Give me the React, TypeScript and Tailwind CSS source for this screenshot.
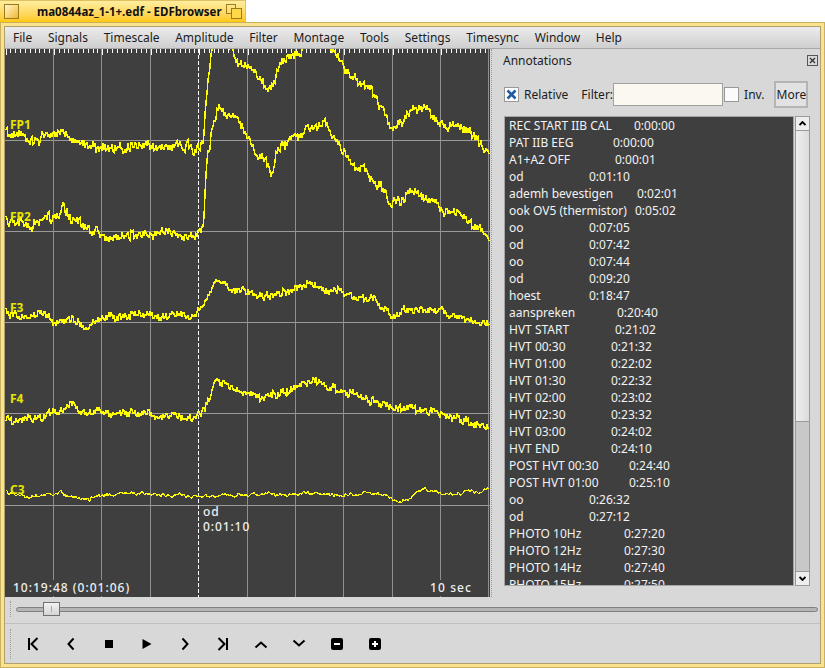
import React from "react";

type P = [number, number];
const fp1: P[] = [[5,130],[8,137],[30,137],[50,135],[59,130],[62,128],[70,140],[90,146],[130,147],[150,146],[195,148],[203,140],[206,100],[210,65],[213,40],[228,40],[240,62],[250,68],[257,77],[265,88],[272,87],[276,76],[280,62],[287,57],[300,50],[305,40],[328,40],[332,50],[345,70],[360,85],[372,90],[385,115],[392,130],[405,118],[415,105],[430,108],[440,125],[455,128],[470,135],[488,155]];
const fp2: P[] = [[5,212],[8,225],[30,225],[40,222],[50,220],[60,215],[62,205],[72,222],[90,232],[130,237],[195,235],[203,225],[207,160],[212,130],[219,107],[230,115],[245,135],[255,150],[265,160],[272,170],[278,150],[290,143],[300,135],[315,122],[325,120],[335,140],[350,160],[365,175],[380,185],[392,205],[405,195],[415,190],[430,203],[445,210],[460,215],[488,238]];
const f3: P[] = [[5,310],[8,316],[25,317],[35,312],[50,314],[53,320],[80,323],[88,330],[100,318],[130,315],[195,316],[205,305],[215,283],[225,285],[250,292],[280,292],[310,283],[340,292],[370,300],[395,315],[415,308],[440,312],[470,320],[488,325]];
const f4: P[] = [[5,420],[40,417],[60,412],[70,405],[85,412],[120,413],[195,417],[205,410],[215,380],[240,390],[265,398],[290,390],[315,382],[340,390],[370,398],[395,408],[420,408],[450,415],[488,428]];
const c3: P[] = [[5,492],[30,497],[60,493],[90,500],[100,496],[130,493],[195,496],[300,494],[380,494],[392,499],[400,503],[410,497],[425,490],[440,495],[488,491]];

function trace(k: P[], amp: number, seed: number) {
  let s = seed;
  const rnd = () => {
    s = (s * 16807) % 2147483647;
    return s / 2147483647 - 0.5;
  };
  const pts: string[] = [];
  let i = 0;
  let slow = 0;
  for (let x = 6; x <= 489; x += 1) {
    while (i < k.length - 2 && x > k[i + 1][0]) i++;
    const [x0, y0] = k[i];
    const [x1, y1] = k[i + 1];
    slow = slow * 0.8 + rnd() * amp * 0.6;
    const y = y0 + ((y1 - y0) * (x - x0)) / (x1 - x0) + rnd() * amp + slow;
    pts.push(`${x},${y.toFixed(0)}`);
  }
  return pts.join(" ");
}

const vlines = [53, 101, 150, 247, 295, 343, 392, 440, 488];
const hlines = [140, 231, 322, 413, 505];
const ticks = Array.from({ length: 101 }, (_, i) => 5.5 + i * 4.84);

const rows: [string, string, number][] = [
  ["REC START IIB CAL", "0:00:00", 634],
  ["PAT IIB EEG", "0:00:00", 613],
  ["A1+A2 OFF", "0:00:01", 615],
  ["od", "0:01:10", 589],
  ["ademh bevestigen", "0:02:01", 637],
  ["ook OV5 (thermistor)", "0:05:02", 635],
  ["oo", "0:07:05", 589],
  ["od", "0:07:42", 589],
  ["oo", "0:07:44", 589],
  ["od", "0:09:20", 589],
  ["hoest", "0:18:47", 589],
  ["aanspreken", "0:20:40", 617],
  ["HVT START", "0:21:02", 615],
  ["HVT 00:30", "0:21:32", 611],
  ["HVT 01:00", "0:22:02", 611],
  ["HVT 01:30", "0:22:32", 611],
  ["HVT 02:00", "0:23:02", 611],
  ["HVT 02:30", "0:23:32", 611],
  ["HVT 03:00", "0:24:02", 611],
  ["HVT END", "0:24:10", 611],
  ["POST HVT 00:30", "0:24:40", 629],
  ["POST HVT 01:00", "0:25:10", 629],
  ["oo", "0:26:32", 589],
  ["od", "0:27:12", 589],
  ["PHOTO 10Hz", "0:27:20", 624],
  ["PHOTO 12Hz", "0:27:30", 624],
  ["PHOTO 14Hz", "0:27:40", 624],
  ["PHOTO 15Hz", "0:27:50", 624],
];

const menus = ["File", "Signals", "Timescale", "Amplitude", "Filter", "Montage", "Tools", "Settings", "Timesync", "Window", "Help"];

function Chart() {
  return (
    <svg viewBox="5 49 485 548" width={485} height={548} className="absolute left-0 top-0" shapeRendering="crispEdges">
      {hlines.map((y) => (
        <line key={y} x1={5} x2={490} y1={y + 0.5} y2={y + 0.5} stroke="#9a9a9a" strokeWidth={1} />
      ))}
      {vlines.map((x) => (
        <line key={x} x1={x + 0.5} x2={x + 0.5} y1={49} y2={597} stroke="#8f8f8f" strokeWidth={1} />
      ))}
      <line x1={198.5} x2={198.5} y1={49} y2={597} stroke="#ffffff" strokeWidth={1} strokeDasharray="4 2" />
      {ticks.map((x, i) => (
        <line key={i} x1={Math.round(x) + 0.5} x2={Math.round(x) + 0.5} y1={49} y2={i % 10 === 0 ? 55 : 53} stroke="#ffffff" strokeWidth={1} />
      ))}
      <g fill="none" stroke="#ffff00" strokeLinejoin="miter">
        <polyline points={trace(fp1, 8, 11)} strokeWidth={1.5} />
        <polyline points={trace(fp2, 8, 29)} strokeWidth={1.5} />
        <polyline points={trace(f3, 6, 47)} strokeWidth={1.5} />
        <polyline points={trace(f4, 6, 83)} strokeWidth={1.5} />
        <polyline points={trace(c3, 3, 131)} strokeWidth={1.2} />
      </g>
    </svg>
  );
}

const icon = "w-[38px] h-[38px] flex items-center justify-center";
function Toolbar() {
  const s = { width: 16, height: 16, viewBox: "0 0 16 16", fill: "none", stroke: "#000", strokeWidth: 2 } as const;
  return (
    <div className="flex items-center ml-[3px]">
      <div className={icon}><svg {...s}><path d="M4 2v12M12.500 2L6.500 8l6 6" /></svg></div>
      <div className={icon}><svg {...s}><path d="M10.500 2.500L5.500 8l5 5.500" /></svg></div>
      <div className={icon}><svg {...s}><rect x="4" y="4" width="8" height="8" fill="#000" stroke="none" /></svg></div>
      <div className={icon}><svg {...s}><path d="M3.500 3L12.500 8l-9 5z" fill="#000" stroke="none" /></svg></div>
      <div className={icon}><svg {...s}><path d="M5.500 2.500L10.500 8l-5 5.500" /></svg></div>
      <div className={icon}><svg {...s}><path d="M3.500 2l6 6-6 6M12 2v12" /></svg></div>
      <div className={icon}><svg {...s}><path d="M2.500 11.500L8 6.500l5.500 5" /></svg></div>
      <div className={icon}><svg {...s}><path d="M2.500 4.500L8 9.500l5.500-5" /></svg></div>
      <div className={icon}><svg {...s}><rect x="2" y="2" width="12" height="12" rx="2" fill="#000" stroke="none" /><path d="M5 8h6" stroke="#fff" /></svg></div>
      <div className={icon}><svg {...s}><rect x="2" y="2" width="12" height="12" rx="2" fill="#000" stroke="none" /><path d="M5 8h6M8 5v6" stroke="#fff" /></svg></div>
    </div>
  );
}

function Grip({ h }: { h: string }) {
  return <div className={`w-[1px] shrink-0 border-l border-dotted border-[#9a9a9a] ${h}`} />;
}

export default function App() {
  return (
    <div className="w-[825px] h-[668px] bg-white flex flex-col overflow-hidden text-[12px] text-[#1c1c1c] font-['Noto_Sans',sans-serif]">
      <div className="w-[246px] h-[22px] shrink-0 border-t border-r border-[#e0c060] bg-gradient-to-b from-[#ffee9e] to-[#ffc800] flex items-center pl-[4px] pr-[1px]">
        <div className="w-[15px] h-[15px] border border-[#9a7a20] bg-gradient-to-br from-[#fff6c8] to-[#f0b800]" />
        <div className="flex-1 pl-[18px] text-[11.5px] font-bold text-[#111] leading-none">ma0844az_1-1+.edf - EDFbrowser</div>
        <div className="relative w-[18px] h-[15px]">
          <div className="absolute left-0 top-0 w-[10px] h-[10px] border border-[#9a7a20]" />
          <div className="absolute left-[5px] top-[4px] w-[11px] h-[11px] border border-[#9a7a20] bg-[#ffd84a]" />
        </div>
      </div>
      <div className="flex-1 min-h-0 border border-[#c9b063] bg-[#fbe28c] p-[3px]">
        <div className="h-full border border-[#b0a070] bg-[#d8d8d8] flex flex-col">
          <div className="h-[22px] shrink-0 flex items-center pl-[8px] gap-[15.7px] bg-gradient-to-b from-[#ececec] to-[#cfcfcf] border-b border-[#a8a8a8]">
            {menus.map((m) => <span key={m}>{m}</span>)}
          </div>
          <div className="flex h-[548px] shrink-0">
            <div className="relative w-[485px] h-[548px] shrink-0 bg-[#3f3f3f] overflow-hidden">
              <Chart />
              <div className="absolute left-[5px] top-[68px] text-[12px] font-bold text-[#e6e600] leading-4">FP1</div>
              <div className="absolute left-[5px] top-[160px] text-[12px] font-bold text-[#e6e600] leading-4">FP2</div>
              <div className="absolute left-[5px] top-[251px] text-[12px] font-bold text-[#e6e600] leading-4">F3</div>
              <div className="absolute left-[5px] top-[342px] text-[12px] font-bold text-[#e6e600] leading-4">F4</div>
              <div className="absolute left-[5px] top-[433px] text-[12px] font-bold text-[#e6e600] leading-4">C3</div>
              <div className="absolute left-[198px] top-[455px] text-[12px] font-medium tracking-[0.9px] text-[#f0f0f0] leading-[15px]">od<br />0:01:10</div>
              <div className="absolute left-[8px] top-[531px] bg-[#3f3f3f] text-[12px] font-medium tracking-[1px] text-[#f0f0f0] leading-4 pr-1">10:19:48 (0:01:06)</div>
              <div className="absolute left-[425px] top-[531px] bg-[#3f3f3f] text-[12px] font-medium tracking-[1.1px] text-[#f0f0f0] leading-4">10 sec</div>
            </div>
            <div className="flex-1 min-w-0 flex pl-[1px]">
              <Grip h="h-full" />
              <div className="flex-1 min-w-0 flex flex-col pl-[11px] pr-[2px]">
                <div className="h-[24px] shrink-0 flex items-center justify-between pb-[1px]">
                  <span>Annotations</span>
                  <div className="w-[11px] h-[11px] border border-[#555] flex items-center justify-center">
                    <svg width="7" height="7" viewBox="0 0 7 7"><path d="M1 1l5 5M6 1L1 6" stroke="#333" strokeWidth="1.300" /></svg>
                  </div>
                </div>
                <div className="h-[43px] shrink-0 flex items-center pl-[1px] relative">
                  <div className="w-[15px] h-[15px] border border-[#999] bg-white flex items-center justify-center">
                    <svg width="11" height="11" viewBox="0 0 11 11"><path d="M1.500 1.500l8 8M9.500 1.500l-8 8" stroke="#1f5a9e" strokeWidth="2.600" /></svg>
                  </div>
                  <span className="ml-[5px]">Relative</span>
                  <span className="ml-[13px]">Filter:</span>
                  <div className="w-[110px] h-[23px] border border-[#a0a0a0] bg-[#fbf8f0]" />
                  <div className="ml-[1px] w-[15px] h-[15px] border border-[#999] bg-[#fbfbfb]" />
                  <span className="ml-[5px]">Inv.</span>
                  <div className="ml-[10px] w-[34px] h-[27px] border-2 border-[#b4b4b4] bg-[#e2e2e2] flex items-center justify-center">More</div>
                </div>
                <div className="flex h-[470px] shrink-0 pl-[1px]">
                  <div className="w-[290px] bg-[#3f3f3f] border border-[#a5a5a5] overflow-hidden pl-[4px] text-[#f2f2f2]">
                    {rows.map(([name, time, x], i) => (
                      <div key={i} className="h-[17px] leading-[17px] whitespace-pre">
                        <span className="inline-block" style={{ width: x - 509 }}>{name}</span>
                        {time}
                      </div>
                    ))}
                  </div>
                  <div className="ml-[1px] w-[15px] flex flex-col border border-[#9a9a9a] bg-[#c8c8c8]">
                    <div className="h-[14px] bg-[#eeeeee] border-b border-[#9a9a9a] flex items-center justify-center">
                      <svg width="7" height="5" viewBox="0 0 7 5"><path d="M0.500 4L3.500 1l3 3" stroke="#000" strokeWidth="1.800" fill="none" /></svg>
                    </div>
                    <div className="h-[291px] bg-gradient-to-r from-[#eeeeee] to-[#dcdcdc] border-b border-[#9a9a9a]" />
                    <div className="flex-1" />
                    <div className="h-[14px] bg-[#eeeeee] border-t border-[#9a9a9a] flex items-center justify-center">
                      <svg width="7" height="5" viewBox="0 0 7 5"><path d="M0.500 1l3 3 3-3" stroke="#000" strokeWidth="1.800" fill="none" /></svg>
                    </div>
                  </div>
                </div>
              </div>
            </div>
          </div>
          <div className="h-[27px] shrink-0 flex items-center pl-[5px] pb-[2px] border-b border-[#c0c0c0]">
            <Grip h="h-[16px]" />
            <div className="relative ml-[5px] w-[802px] h-[5px] rounded-full border border-[#808080] bg-[#b5b5b5]">
              <div className="absolute left-[26px] top-[-6px] w-[17px] h-[14px] border border-[#707070] bg-gradient-to-b from-[#f2f2f2] to-[#d4d4d4] flex items-center justify-center">
                <div className="w-[1px] h-[6px] bg-[#aaaaaa]" />
              </div>
            </div>
          </div>
          <div className="flex-1 min-h-0 flex items-center pl-[5px]">
            <Grip h="h-[30px]" />
            <Toolbar />
          </div>
        </div>
      </div>
    </div>
  );
}
